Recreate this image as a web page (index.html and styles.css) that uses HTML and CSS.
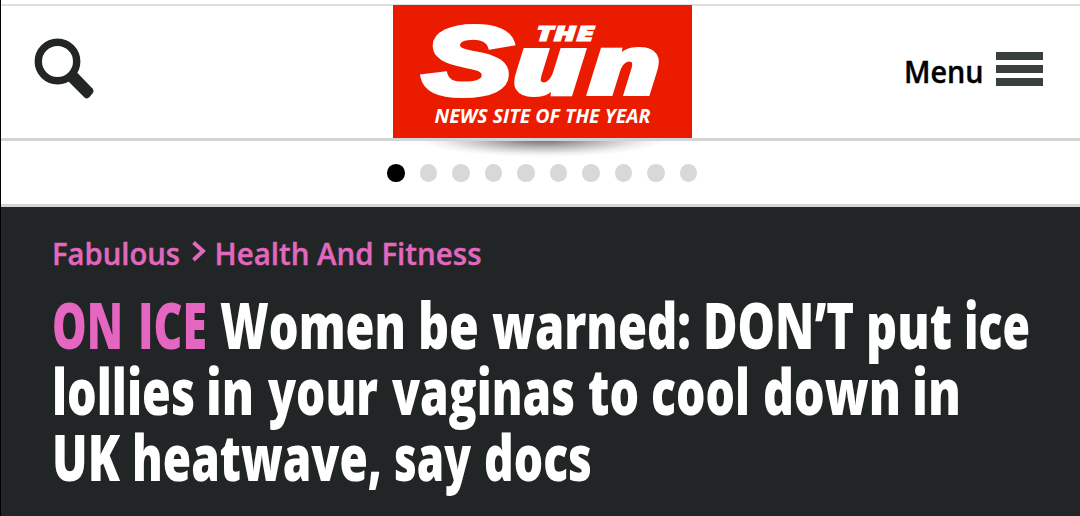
FILE: index.html
```
<!DOCTYPE html>
<html lang="en">
<head>
    <meta charset="UTF-8">
    <meta name="viewport" content="width=device-width, initial-scale=1.0">
    <title>The Sun</title>
    <link rel="stylesheet" href="styles.css">
</head>
<body>
    <header class="header">
        <a class="search">
            <svg width="60" height="62" viewBox="0 0 60 62">
                <circle cx="23.5" cy="23.5" r="19.2" fill="none" stroke="#222526" stroke-width="7.4"/>
                <path d="M33 42 L42.5 34 L58.5 50.5 Q60.5 53 58.5 55.5 L55.5 59 Q53 61.5 50.5 59.5 Z" fill="#222526"/>
            </svg>
        </a>
        <a class="logo">
            <svg width="299" height="133" viewBox="0 0 299 133">
                <g class="logo-text">
                    <text class="big-s" x="30" y="88.5" font-size="97" textLength="89" lengthAdjust="spacingAndGlyphs">S</text>
                    <text x="117" y="90" font-size="83" textLength="153" lengthAdjust="spacingAndGlyphs">un</text>
                    <text class="the" x="143" y="35.5" font-size="21" textLength="58" lengthAdjust="spacingAndGlyphs">THE</text>
                </g>
                <text class="tagline" x="41.5" y="118.3" textLength="216" lengthAdjust="spacingAndGlyphs">NEWS SITE OF THE YEAR</text>
            </svg>
        </a>
        <a class="menu">
            <svg width="79.500" height="40" viewBox="0 0 79.5 40">
                <text x="0" y="31" textLength="79.5" lengthAdjust="spacingAndGlyphs">Menu</text>
            </svg>
            <span class="burger"><i></i><i></i><i></i></span>
        </a>
    </header>

    <div class="dots">
        <span class="dot active"></span>
        <span class="dot"></span>
        <span class="dot"></span>
        <span class="dot"></span>
        <span class="dot"></span>
        <span class="dot"></span>
        <span class="dot"></span>
        <span class="dot"></span>
        <span class="dot"></span>
        <span class="dot"></span>
    </div>

    <main class="article">
        <nav class="breadcrumb">
            <svg width="480" height="40" viewBox="50 235 480 40">
                <text x="52" y="265" textLength="128" lengthAdjust="spacingAndGlyphs">Fabulous</text>
                <path d="M193.5 242.5 L203 251 L193.5 260" fill="none" stroke="#e068bd" stroke-width="4"/>
                <text x="214.5" y="265" textLength="267" lengthAdjust="spacingAndGlyphs">Health And Fitness</text>
            </svg>
        </nav>
        <h1 class="headline">
            <svg width="990" height="220" viewBox="50 290 990 220">
                <text y="348.5">
                    <tspan class="kicker" x="52" textLength="71" lengthAdjust="spacingAndGlyphs">ON</tspan>
                    <tspan class="kicker" x="138" textLength="69" lengthAdjust="spacingAndGlyphs">ICE</tspan>
                    <tspan x="220" textLength="186" lengthAdjust="spacingAndGlyphs">Women</tspan>
                    <tspan x="418" textLength="61" lengthAdjust="spacingAndGlyphs">be</tspan>
                    <tspan x="492" textLength="199" lengthAdjust="spacingAndGlyphs">warned:</tspan>
                    <tspan x="703" textLength="151" lengthAdjust="spacingAndGlyphs">DON’T</tspan>
                    <tspan x="866" textLength="86" lengthAdjust="spacingAndGlyphs">put</tspan>
                    <tspan x="964" textLength="66" lengthAdjust="spacingAndGlyphs">ice</tspan>
                </text>
                <text y="414.5">
                    <tspan x="52" textLength="143" lengthAdjust="spacingAndGlyphs">lollies</tspan>
                    <tspan x="206" textLength="48" lengthAdjust="spacingAndGlyphs">in</tspan>
                    <tspan x="268" textLength="110" lengthAdjust="spacingAndGlyphs">your</tspan>
                    <tspan x="392" textLength="183" lengthAdjust="spacingAndGlyphs">vaginas</tspan>
                    <tspan x="588" textLength="51" lengthAdjust="spacingAndGlyphs">to</tspan>
                    <tspan x="651" textLength="99" lengthAdjust="spacingAndGlyphs">cool</tspan>
                    <tspan x="763" textLength="138" lengthAdjust="spacingAndGlyphs">down</tspan>
                    <tspan x="912" textLength="49" lengthAdjust="spacingAndGlyphs">in</tspan>
                </text>
                <text y="480.5">
                    <tspan x="52" textLength="68" lengthAdjust="spacingAndGlyphs">UK</tspan>
                    <tspan x="132" textLength="250" lengthAdjust="spacingAndGlyphs">heatwave,</tspan>
                    <tspan x="394" textLength="77" lengthAdjust="spacingAndGlyphs">say</tspan>
                    <tspan x="484" textLength="108" lengthAdjust="spacingAndGlyphs">docs</tspan>
                </text>
            </svg>
        </h1>
    </main>
</body>
</html>
```
FILE: styles.css
```
* { box-sizing: border-box; }
body { margin: 0; height: 516px; overflow: hidden; display: flex; flex-direction: column; padding-top: 4px; background: #fff; border-left: 1.5px solid #000; font-family: "Open Sans", "Noto Sans", sans-serif; }
svg { display: block; overflow: visible; }

.header { height: 137px; display: grid; grid-template-columns: 392px 299px 1fr; border-top: 2px solid #e0e0e0; border-bottom: 3px solid #d3d5d5; }
.search { padding: 32px 0 0 33px; }
.logo { position: relative; height: 133px; margin-top: -1px; background: #eb1b00; }
.logo::before { content: ""; position: absolute; left: 25px; right: 25px; top: 116px; height: 36px; z-index: -1; background: radial-gradient(closest-side, rgba(0,0,0,.6), rgba(0,0,0,.22) 55%, rgba(0,0,0,.06) 82%, transparent); }
.logo-text { font-weight: 800; font-style: italic; fill: #fff; stroke: #fff; stroke-width: 2; }
.big-s { font-family: "Liberation Sans", Arial, sans-serif; font-weight: 700; stroke-width: 6; }
.the { stroke-width: 1; }
.tagline { font-size: 20px; font-weight: 700; font-style: italic; fill: #fff; }
.menu { display: flex; padding: 46px 0 0 212px; gap: 12px; font-size: 30px; font-weight: 600; }
.menu text { stroke: #000; stroke-width: .4; }
.burger { display: flex; flex-direction: column; gap: 5px; width: 47px; }
.burger i { height: 8px; background: #3a3f40; }

.dots { height: 66px; display: flex; justify-content: center; gap: 15px; padding: 23px 0 0 3px; border-bottom: 3px solid #d3d5d5; }
.dot { width: 17.5px; height: 17.5px; border-radius: 50%; background: #d8d8d8; }
.dot.active { background: #000; }

.article { flex: 1; padding: 28px 0 0 49px; background: #222526; }
.breadcrumb { font-size: 30px; font-weight: 600; fill: #e068bd; }
.breadcrumb text { stroke: #e068bd; stroke-width: .4; }
.headline { margin: 15px 0 0; font-size: 63px; font-weight: 800; fill: #fff; }
.kicker { fill: #e566c0; }
```
